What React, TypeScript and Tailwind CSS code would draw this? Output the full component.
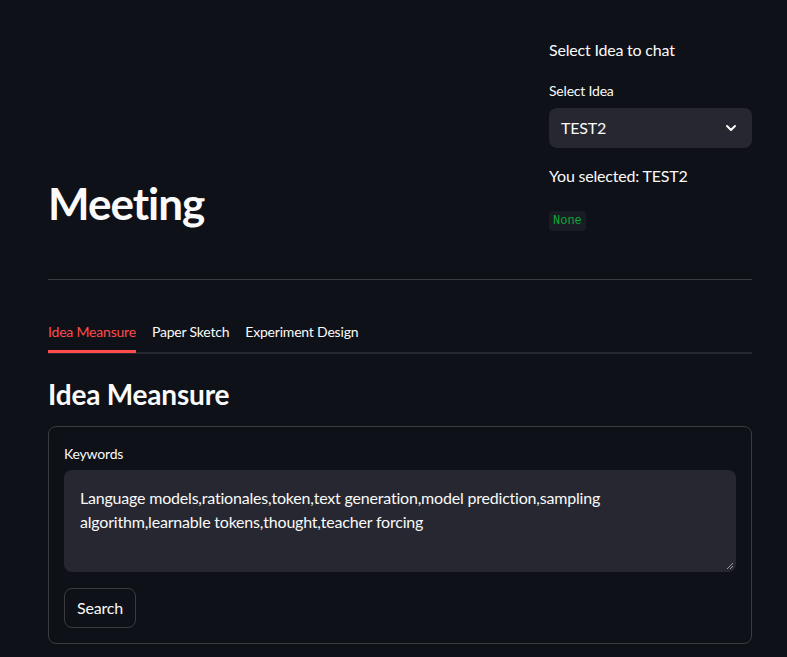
import React from "react";

export default function App() {
  return (
    <div
      className="min-h-[657px] w-full bg-[#0e1117] text-[#fafafa] tracking-[-0.2px]"
      style={{ fontFamily: "Lato, 'Noto Sans', sans-serif" }}
    >
      <div className="ml-12 w-[704px] pt-[38px]">
        {/* Top columns */}
        <div className="flex gap-4">
          <div className="flex-1 flex items-end">
            <h1 className="text-[44px] font-bold leading-[56px] tracking-[-1px]">Meeting</h1>
          </div>
          <div className="w-[203px] flex flex-col">
            <div className="text-[16px] leading-6">Select Idea to chat</div>
            <div className="mt-[19px] text-[14px] leading-5">Select Idea</div>
            <div className="mt-[7px] h-10 rounded-lg bg-[#262730] flex items-center justify-between pl-3 pr-[13px]">
              <span className="text-[16px]">TEST2</span>
              <svg width="16" height="16" viewBox="0 0 24 24" fill="none" stroke="#fafafa" strokeWidth="3" strokeLinecap="round" strokeLinejoin="round">
                <path d="M6 9l6 6 6-6" />
              </svg>
            </div>
            <div className="mt-[16px] text-[16px] leading-6">You selected: TEST2</div>
            <div className="mt-[18px]">
              <span
                className="inline-block rounded bg-[#1a1c23] px-1 text-[12px] leading-[20px] text-[#09ab3b] tracking-normal"
                style={{ fontFamily: "'Liberation Mono', 'DejaVu Sans Mono', monospace" }}
              >
                None
              </span>
            </div>
          </div>
        </div>

        {/* Divider */}
        <div className="mt-[48px] h-px bg-[#3a3c42]" />

        {/* Tabs */}
        <div className="mt-[42px] relative">
          <div className="flex gap-4 text-[14px] leading-5">
            <div className="relative pb-[10px] text-[#ff4b4b]">
              Idea Meansure
              <div className="absolute left-0 right-0 bottom-[-1px] h-[3px] bg-[#ff4b4b] z-10" />
            </div>
            <div className="pb-[10px]">Paper Sketch</div>
            <div className="pb-[10px]">Experiment Design</div>
          </div>
          <div className="h-[2px] bg-[#26272f]" />
        </div>

        {/* Heading */}
        <h2 className="mt-[22px] text-[28px] font-bold leading-9">Idea Meansure</h2>

        {/* Bordered container */}
        <div className="mt-[14px] rounded-lg border border-[#3a3c42] p-[15px]">
          <div className="text-[14px] leading-5 mt-[2px]">Keywords</div>
          <div className="mt-[6px] relative rounded-lg bg-[#262730] h-[102px] px-4 pt-[16px] text-[16px] leading-6">
            Language models,rationales,token,text generation,model prediction,sampling algorithm,learnable tokens,thought,teacher forcing
            <svg className="absolute right-[2px] bottom-[2px]" width="8" height="8" viewBox="0 0 8 8">
              <path d="M7 1L1 7M7 4L4 7" stroke="#9a9a9a" strokeWidth="1" />
            </svg>
          </div>
          <div className="mt-4 inline-flex h-10 items-center rounded-lg border border-[#3a3c42] px-3 text-[16px]">Search</div>
        </div>
      </div>
    </div>
  );
}
